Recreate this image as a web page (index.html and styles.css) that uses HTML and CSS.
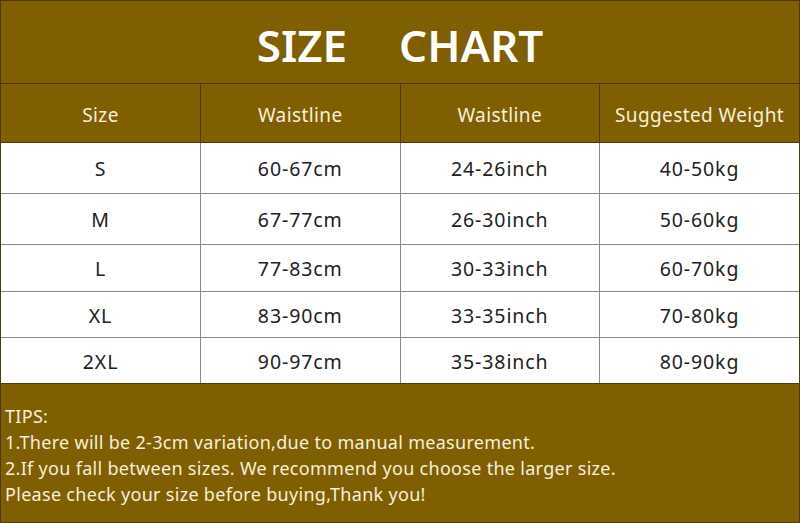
FILE: index.html
```html
<!DOCTYPE html>
<html>
<head>
<meta charset="utf-8">
<link rel="stylesheet" href="styles.css">
</head>
<body>
<div class="chart">
  <div class="title"><span>SIZE</span><span>CHART</span></div>
  <table class="grid">
    <thead>
      <tr class="head"><th>Size</th><th>Waistline</th><th>Waistline</th><th>Suggested Weight</th></tr>
    </thead>
    <tbody>
      <tr class="r1"><td>S</td><td>60-67cm</td><td>24-26inch</td><td>40-50kg</td></tr>
      <tr class="r2"><td>M</td><td>67-77cm</td><td>26-30inch</td><td>50-60kg</td></tr>
      <tr class="r3"><td>L</td><td>77-83cm</td><td>30-33inch</td><td>60-70kg</td></tr>
      <tr class="r4"><td>XL</td><td>83-90cm</td><td>33-35inch</td><td>70-80kg</td></tr>
      <tr class="r5"><td>2XL</td><td>90-97cm</td><td>35-38inch</td><td>80-90kg</td></tr>
    </tbody>
  </table>
  <div class="tips">
    <p>TIPS:</p>
    <p>1.There will be 2-3cm variation,due to manual measurement.</p>
    <p>2.If you fall between sizes. We recommend you choose the larger size.</p>
    <p>Please check your size before buying,Thank you!</p>
  </div>
</div>
</body>
</html>
```
FILE: styles.css
```css
html, body {
  margin: 0;
  padding: 0;
  background: #ffffff;
}
.chart {
  width: 800px;
  height: 523px;
  box-sizing: border-box;
  border: 1px solid #4a3b12;
  font-family: "Noto Sans", "Open Sans", sans-serif;
  display: flex;
  flex-direction: column;
}
.title {
  height: 83px;
  flex: none;
  box-sizing: border-box;
  padding-top: 5px;
  background: #7f5f00;
  color: #ffffff;
  font-weight: 600;
  font-size: 44px;
  display: flex;
  justify-content: center;
  align-items: center;
  gap: 52px;
  border-bottom: 1px solid #4a3b12;
}
.grid {
  width: 100%;
  border-collapse: collapse;
  table-layout: fixed;
}
.grid th, .grid td {
  text-align: center;
  padding: 0;
  width: 25%;
}
.head th {
  height: 58px;
  box-sizing: border-box;
  padding-top: 4px;
  background: #7f5f00;
  color: #f6efdc;
  font-weight: 400;
  font-size: 19px;
  letter-spacing: 0.4px;
  border-left: 1px solid #4a3b12;
  border-bottom: 1px solid #4a3b12;
}
.head th:first-child { border-left: none; }
.grid td {
  font-size: 19.5px;
  letter-spacing: 0.9px;
  color: #222222;
  padding-top: 2px;
  border-left: 1px solid #8a8a8a;
  border-top: 1px solid #8a8a8a;
}
.grid td:first-child { border-left: none; }
.r1 td { height: 48px; border-top: none; }
.r2 td { height: 48px; }
.r3 td { height: 44px; }
.r4 td { height: 43px; }
.r5 td { height: 43px; }
.tips {
  flex: 1;
  background: #7f5f00;
  color: #f6efdc;
  border-top: 1px solid #4a3b12;
  font-size: 18px;
  letter-spacing: 0.3px;
  padding: 19px 0 0 4px;
}
.tips p {
  margin: 0;
  line-height: 26px;
}
```
